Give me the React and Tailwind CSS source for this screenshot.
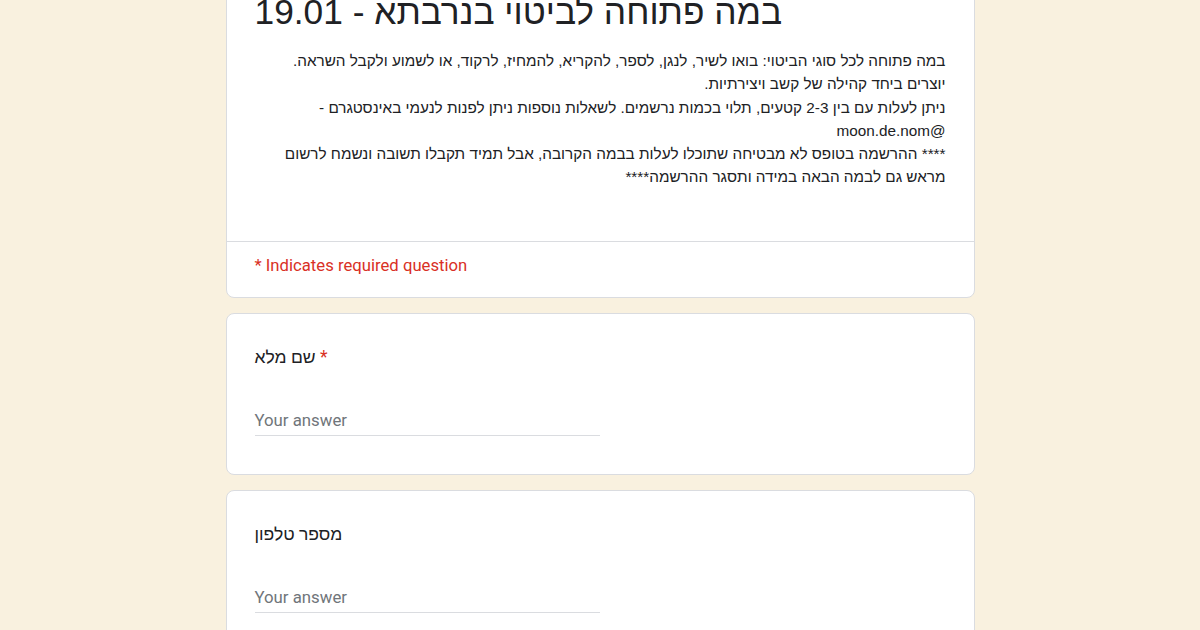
const hebrew = { fontFamily: "Roboto, 'Liberation Sans', Arial, sans-serif" };

function QuestionCard({ title, required }) {
  return (
    <div className="rounded-lg border border-[#dadce0] bg-white px-7 pt-[31px] pb-[38px]">
      <div className="text-[17.5px] leading-6 text-[#202124]">
        {title}
        {required && <span className="text-[#d93025]"> *</span>}
      </div>
      <div className="mt-[41px] w-1/2 border-b border-[#dadce0] pb-[5px]">
        <div className="text-[16.8px] leading-5 text-[#70757a]">Your answer</div>
      </div>
    </div>
  );
}

export default function App() {
  return (
    <div className="flex min-h-screen justify-center overflow-hidden bg-[#f9f1df]" style={hebrew}>
      <div className="-mt-[30px] flex w-[749px] flex-col gap-[15px] pb-10">
        <div className="rounded-lg border border-[#dadce0] bg-white">
          <div className="px-7 pt-[21px] pb-[52px]">
            <div className="text-[35.3px] leading-10 text-[#202124]" style={{ fontFamily: "'Liberation Sans', Arial, sans-serif" }}>
              במה פתוחה לביטוי בנרבתא - 19.01
            </div>
            <div
              dir="rtl"
              className="mt-[17px] whitespace-pre-wrap text-[15.3px] leading-[23.3px] text-[#202124]"
              style={{ fontFamily: "'Liberation Sans', Arial, sans-serif" }}
            >
              {"במה פתוחה לכל סוגי הביטוי: בואו לשיר, לנגן, לספר, להקריא, להמחיז, לרקוד, או לשמוע ולקבל השראה.\nיוצרים ביחד קהילה של קשב ויצירתיות.\nניתן לעלות עם בין 2-3 קטעים, תלוי בכמות נרשמים. לשאלות נוספות ניתן לפנות לנעמי באינסטגרם - @moon.de.nom\n**** ההרשמה בטופס לא מבטיחה שתוכלו לעלות בבמה הקרובה, אבל תמיד תקבלו תשובה ונשמח לרשום מראש גם לבמה הבאה במידה ותסגר ההרשמה****"}
            </div>
          </div>
          <div className="border-t border-[#dadce0] px-7 pt-[14px] pb-[21px]">
            <div className="text-[16.7px] leading-5 text-[#d93025]" style={{ fontFamily: "Roboto, sans-serif" }}>
              * Indicates required question
            </div>
          </div>
        </div>
        <QuestionCard title="שם מלא" required />
        <QuestionCard title="מספר טלפון" />
      </div>
    </div>
  );
}
